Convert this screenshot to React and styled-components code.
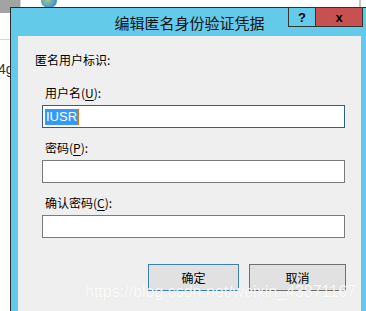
import React from 'react';
import styled, { createGlobalStyle } from 'styled-components';

const Global = createGlobalStyle`
  *, *::before, *::after { box-sizing: border-box; }
  html, body {
    margin: 0;
    padding: 0;
    background: #ffffff;
  }
  body {
    font-family: "Noto Sans CJK SC", "Liberation Sans", sans-serif;
  }
`

const Desktop = styled.div`
  position: relative;
  width: 366px;
  height: 311px;
  overflow: hidden;
  background: #ffffff;
`

const GrayBlock = styled.div`
  position: absolute;
  left: 0;
  top: 0;
  width: 21px;
  height: 13px;
  background: #a3a3a3;
  border-right: 1px solid #d6d6d6;
`

const BackLine = styled.div`
  position: absolute;
  left: 0;
  top: 39px;
  width: 12px;
  height: 1px;
  background: #d4d4d4;
`

const BackText = styled.div`
  position: absolute;
  left: -2px;
  top: 61px;
  font-family: "Liberation Sans", sans-serif;
  font-size: 14px;
  color: #333;
`

const Globe = styled.div`
  position: absolute;
  left: 41px;
  top: -6px;
  width: 16px;
  height: 14px;
  border-radius: 50%;
  background: radial-gradient(circle at 40% 40%, #9fd08a, #4a8fc9 70%);
`

const ScrollEdge = styled.div`
  position: absolute;
  left: 359px;
  top: 0;
  width: 2px;
  height: 7px;
  background: #c6c6c6;
`

const Window = styled.div`
  position: absolute;
  left: 10px;
  top: 7px;
  width: 359px;
  height: 312px;
  border: 1px solid #2d2d2d;
  background: #64caea;
  display: flex;
  flex-direction: column;
  padding: 0 7px 7px 7px;
`

const TitleBar = styled.div`
  position: relative;
  height: 28px;
  display: flex;
  align-items: center;
  justify-content: center;
  font-size: 15px;
  color: #111;
`

const Controls = styled.div`
  position: absolute;
  top: -1px;
  right: -2px;
  display: flex;
`

const CtrlButton = styled.div`
  width: ${p => p.$w}px;
  height: 20px;
  display: flex;
  align-items: center;
  justify-content: center;
  background: ${p => p.$close ? '#c75050' : 'transparent'};
  border: 1px solid #333;
  border-left-width: ${p => p.$close ? 0 : 1}px;
  font-family: "Liberation Sans", sans-serif;
  font-weight: bold;
  font-size: 13px;
  color: #000;
`

const Body = styled.div`
  flex: 1;
  background: #efefef;
  padding: 16px 15px 0 17px;
  display: flex;
  flex-direction: column;
`

const SectionLabel = styled.div`
  font-size: 12px;
  line-height: 16px;
  color: #000;
`

const Group = styled.div`
  padding-left: 7px;
  display: flex;
  flex-direction: column;
`

const FieldLabel = styled.div`
  font-size: 12px;
  line-height: 16px;
  color: #000;
  margin: ${p => p.$first ? 17 : 12}px 0 4px 3px;
  u { text-decoration-thickness: 1px; text-underline-offset: 2px; }
`

const Field = styled.div`
  width: 303px;
  height: 23px;
  background: #fff;
  border: 1px solid ${p => p.$focus ? '#2b5f8c' : '#7a7a7a'};
  display: flex;
  align-items: center;
  padding-left: 2px;
`

const Selected = styled.span`
  background: #3399ff;
  color: #fff;
  font-family: "Liberation Sans", sans-serif;
  font-size: 13px;
  line-height: 16px;
  padding: 0 1px;
  border-right: 1px solid #d57a1a;
`

const Buttons = styled.div`
  display: flex;
  justify-content: flex-end;
  gap: 10px;
  margin-top: 26px;
`

const Btn = styled.div`
  width: ${p => p.$w}px;
  height: 27px;
  background: #e1e1e1;
  border: 1px solid ${p => p.$primary ? '#3c7fb1' : '#707070'};
  display: flex;
  align-items: center;
  justify-content: center;
  font-size: 12px;
  color: #000;
`

const Watermark = styled.div`
  position: absolute;
  left: 85px;
  top: 283px;
  font-family: "Liberation Sans", sans-serif;
  font-size: 16px;
  line-height: 18px;
  color: rgba(255, 255, 255, 0.9);
  text-shadow: 0 0 1px rgba(0, 0, 0, 0.08);
  white-space: nowrap;
`

export default function App() {
  return (
    <Desktop>
      <Global />
      <GrayBlock />
      <BackLine />
      <BackText>4g</BackText>
      <Globe />
      <ScrollEdge />

      <Window>
        <TitleBar>
          编辑匿名身份验证凭据
          <Controls>
            <CtrlButton $w={28}>?</CtrlButton>
            <CtrlButton $w={47} $close>x</CtrlButton>
          </Controls>
        </TitleBar>

        <Body>
          <SectionLabel>匿名用户标识:</SectionLabel>
          <Group>
            <FieldLabel $first>用户名(<u>U</u>):</FieldLabel>
            <Field $focus><Selected>IUSR</Selected></Field>

            <FieldLabel>密码(<u>P</u>):</FieldLabel>
            <Field />

            <FieldLabel>确认密码(<u>C</u>):</FieldLabel>
            <Field />
          </Group>

          <Buttons>
            <Btn $w={91} $primary>确定</Btn>
            <Btn $w={97}>取消</Btn>
          </Buttons>
        </Body>
      </Window>

      <Watermark>https://blog.csdn.net/weixin_43871167</Watermark>
    </Desktop>
  )
}
